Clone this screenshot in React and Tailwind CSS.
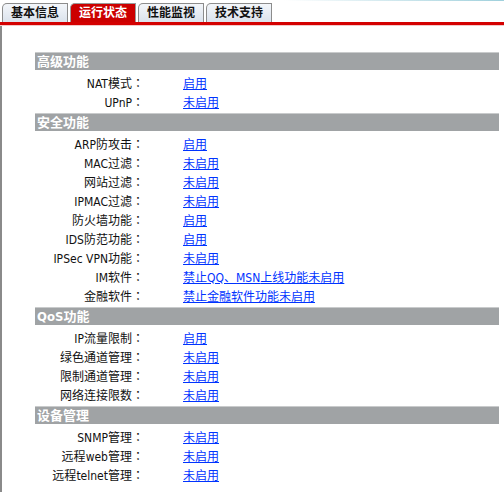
const sections = [
  {
    title: "高级功能",
    rows: [
      ["NAT模式", "启用"],
      ["UPnP", "未启用"],
    ],
  },
  {
    title: "安全功能",
    rows: [
      ["ARP防攻击", "启用"],
      ["MAC过滤", "未启用"],
      ["网站过滤", "未启用"],
      ["IPMAC过滤", "未启用"],
      ["防火墙功能", "启用"],
      ["IDS防范功能", "启用"],
      ["IPSec VPN功能", "未启用"],
      ["IM软件", "禁止QQ、MSN上线功能未启用"],
      ["金融软件", "禁止金融软件功能未启用"],
    ],
  },
  {
    title: "QoS功能",
    rows: [
      ["IP流量限制", "启用"],
      ["绿色通道管理", "未启用"],
      ["限制通道管理", "未启用"],
      ["网络连接限数", "未启用"],
    ],
  },
  {
    title: "设备管理",
    rows: [
      ["SNMP管理", "未启用"],
      ["远程web管理", "未启用"],
      ["远程telnet管理", "未启用"],
    ],
  },
];

const tabs = ["基本信息", "运行状态", "性能监视", "技术支持"];

// latin runs use a narrower face, like Tahoma next to the CJK glyphs
const Mixed = ({ text }) =>
  text.match(/[\x20-\x7e]+|[^\x20-\x7e]+/g).map((part, i) =>
    /^[\x20-\x7e]+$/.test(part) ? (
      <span key={i} style={{ fontFamily: '"DejaVu Sans Condensed", "DejaVu Sans", sans-serif' }}>
        {part}
      </span>
    ) : (
      <span key={i}>{part}</span>
    )
  );

const Tab = ({ label, active }) => (
  <div
    className={`h-[19px] w-[66px] flex items-center justify-center rounded-tl-[5px] border border-b-0 text-[12px] font-bold leading-none ${
      active
        ? "bg-[#cc0000] border-[#9a9a9a] text-white"
        : "bg-gradient-to-b from-[#f3f6fa] to-[#dbe2ec] border-[#8c8c8c] text-[#111]"
    }`}
  >
    {label}
  </div>
);

export default function App() {
  return (
    <div
      className="w-[504px] h-[492px] bg-white overflow-hidden relative"
      style={{ fontFamily: '"DejaVu Sans", "Noto Sans CJK SC", sans-serif' }}
    >
      <div className="absolute top-0 right-0 h-px w-[220px] bg-gradient-to-r from-white to-[#9fd0dc]" />
      {/* tabs */}
      <div className="flex gap-[2px] pl-[2px] pt-[3px]">
        {tabs.map((t) => (
          <Tab key={t} label={t} active={t === "运行状态"} />
        ))}
      </div>
      <div className="h-[3px] bg-[#d40000]" />
      <div className="h-px bg-[#f3c9c9]" />

      <div className="border-l-2 border-[#8a8a8a] h-full pt-[26px] pl-[33px] pr-[5px]">
        {sections.map((s, i) => (
          <div key={s.title} className={i === 0 ? "" : "mt-px"}>
            <div className="h-[18px] bg-[#a0a3a5] border-t border-[#c9cbcc] flex items-center pl-[2px] text-[13px] font-bold text-white leading-none">
              <Mixed text={s.title} />
            </div>
            <div className="pt-[4px]">
              {s.rows.map(([label, value]) => (
                <div key={label} className="h-[19px] flex items-center text-[12px] leading-none">
                  <div className="w-[109px] text-right text-[#111] whitespace-nowrap">
                    <Mixed text={label} />
                    <span style={{ fontFamily: '"Noto Sans CJK TC", sans-serif' }}>：</span>
                  </div>
                  <a href="#" className="ml-[39px] text-[#0033ff] underline whitespace-nowrap">
                    <Mixed text={value} />
                  </a>
                </div>
              ))}
            </div>
          </div>
        ))}
      </div>
    </div>
  );
}
